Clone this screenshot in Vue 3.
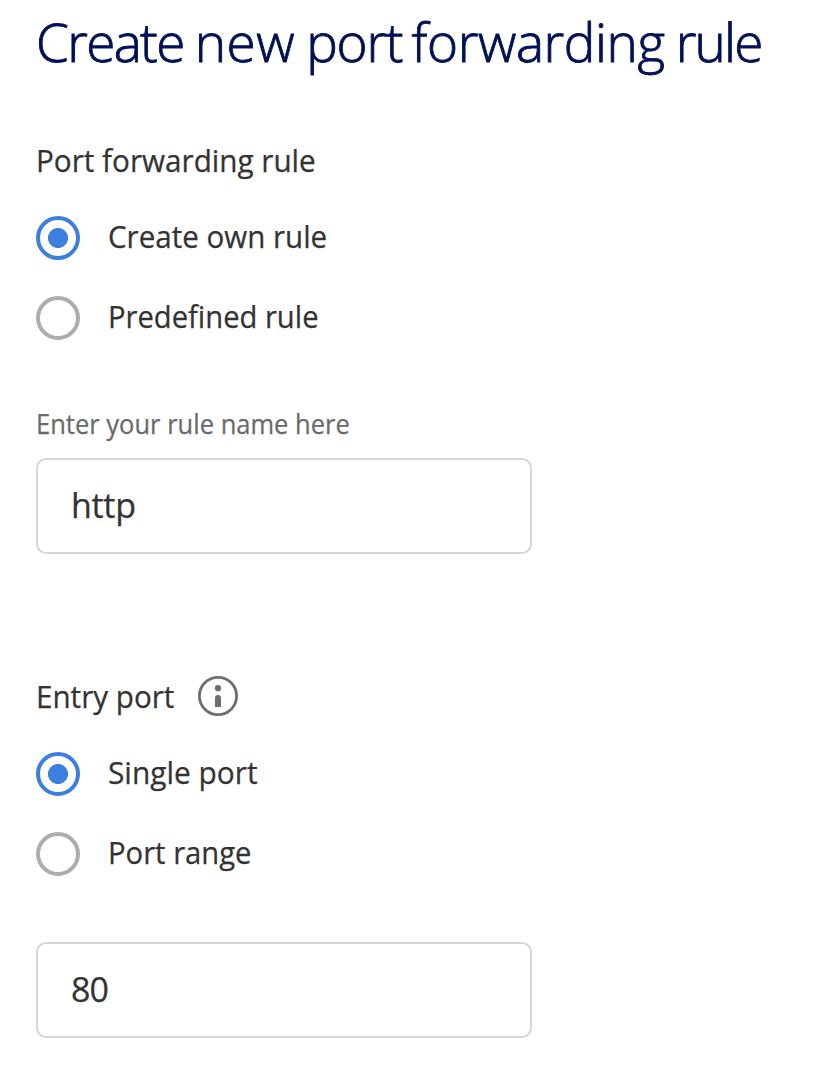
<script setup>
import { ref } from 'vue'

const ruleType = ref('own')
const ruleName = ref('http')
const portType = ref('single')
const port = ref('80')

const ruleOptions = [
  { value: 'own', label: 'Create own rule' },
  { value: 'predefined', label: 'Predefined rule' },
]
const portOptions = [
  { value: 'single', label: 'Single port' },
  { value: 'range', label: 'Port range' },
]
</script>

<template>
  <main class="page">
    <h1 class="title"><span class="w-create">Create</span> <span class="w-new">new</span> <span class="w-port">port</span> <span class="w-forwarding">forwarding</span> <span class="w-rule">rule</span></h1>

    <section class="group rule-group">
      <h2 class="label"><span class="text t-rule">Port forwarding rule</span></h2>
      <label v-for="o in ruleOptions" :key="o.value" class="option">
        <input v-model="ruleType" class="radio" type="radio" name="rule" :value="o.value" />
        <span :class="['text', 't-' + o.value]">{{ o.label }}</span>
      </label>
    </section>

    <label class="field">
      <span class="hint">Enter your rule name here</span>
      <input v-model="ruleName" class="input name" type="text" />
    </label>

    <section class="group port-group">
      <h2 class="label">
        <span class="text t-entry">Entry port</span>
        <svg class="info" width="40" height="40" viewBox="0 0 40 40">
          <circle cx="20" cy="20" r="18.6" fill="none" stroke="#6e6e6e" stroke-width="2.8" />
          <circle cx="20" cy="12.2" r="3.1" fill="#6e6e6e" />
          <path d="M17 31V22a3 3 0 0 1 6 0v9z" fill="#6e6e6e" />
        </svg>
      </h2>
      <label v-for="o in portOptions" :key="o.value" class="option">
        <input v-model="portType" class="radio" type="radio" name="port" :value="o.value" />
        <span :class="['text', 't-' + o.value]">{{ o.label }}</span>
      </label>
    </section>

    <input v-model="port" class="input port" type="text" />
  </main>
</template>

<style>
body {
  background: #fff;
}
</style>

<style scoped>
.page {
  box-sizing: border-box;
  height: 1068px;
  padding: 6px 36px 0;
  overflow: hidden;
  font-family: 'Open Sans', 'Noto Sans', sans-serif;
  color: #333;
  white-space: nowrap;
  -webkit-text-stroke: 0.25px currentColor;
}
.title {
  margin: 0;
  height: 72px;
  line-height: 72px;
  font-size: 53px;
  font-weight: 300;
  word-spacing: -2.6px;
  color: #001155;
  -webkit-text-stroke: 0.9px #001155;
}
.w-create {
  letter-spacing: -1.65px;
}
.w-new {
  letter-spacing: 0.5px;
}
.w-port {
  letter-spacing: -1.2px;
}
.w-forwarding {
  margin-left: -2px;
  letter-spacing: -0.4px;
}
.w-rule {
  letter-spacing: -1.8px;
}
.rule-group {
  margin-top: 64px;
}
.label {
  display: flex;
  align-items: center;
  margin: 0 0 16px;
  height: 40px;
  line-height: 40px;
  font-size: 31px;
  font-weight: 400;
}
.option {
  display: flex;
  align-items: center;
  gap: 28px;
  height: 80px;
  font-size: 31px;
}
.text {
  height: 40px;
  line-height: 36px;
  transform-origin: left center;
}
.t-rule {
  transform: scaleX(0.957);
}
.t-own {
  transform: scaleX(0.953);
}
.t-predefined {
  transform: scaleX(0.941);
}
.t-entry {
  width: 162px;
  line-height: 40px;
  transform: scaleX(0.955);
}
.t-single {
  transform: scaleX(0.963);
}
.t-range {
  transform: scaleX(0.943);
}
.radio {
  appearance: none;
  box-sizing: border-box;
  flex: none;
  width: 44px;
  height: 44px;
  margin: 0;
  border: 4px solid #adadad;
  border-radius: 50%;
  background: #fff;
}
.radio:checked {
  border-color: #3c7fdf;
  background: radial-gradient(circle, #3c7fdf 9.6px, #fff 10.4px);
}
.field {
  display: block;
  margin-top: 46px;
}
.hint {
  display: block;
  height: 40px;
  line-height: 40px;
  font-size: 27.5px;
  color: #6a6a6a;
  transform: scaleX(0.928);
  transform-origin: left center;
}
.input {
  display: block;
  box-sizing: border-box;
  width: 496px;
  height: 96px;
  padding: 0 33px 2px;
  border: 2px solid #d6d6d6;
  border-radius: 10px;
  outline: none;
  background: #fff;
  font: inherit;
  font-size: 34px;
  letter-spacing: -0.3px;
  color: #333;
}
.name {
  margin-top: 14px;
}
.port-group {
  margin-top: 122px;
}
.port-group .label {
  margin-bottom: 18px;
}
.port {
  margin-top: 48px;
  letter-spacing: -1px;
}
.info {
  flex: none;
}
</style>
